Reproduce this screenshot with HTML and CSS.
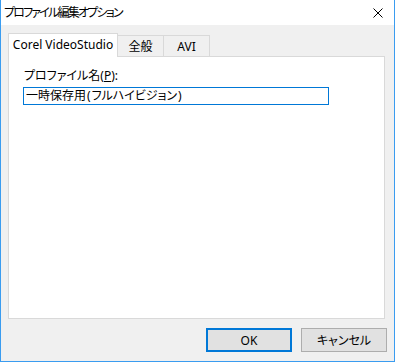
FILE: index.html
```html
<!DOCTYPE html>
<html lang="ja">
<head>
    <meta charset="UTF-8">
    <title>プロファイル編集オプション</title>
    <link rel="stylesheet" href="styles.css">
</head>
<body>
    <div class="window">
        <!-- Title bar -->
        <div class="titlebar">
            <span class="title">プロファイル編集オプション</span>
            <span class="close">
                <svg width="10" height="10" viewBox="0 0 10 10">
                    <path d="M0.5 0.5 L9.5 9.5 M9.5 0.5 L0.5 9.5" stroke="#000" stroke-width="1" fill="none"/>
                </svg>
            </span>
        </div>

        <div class="client">
            <!-- Tabs -->
            <div class="tabs">
                <div class="tab active">Corel VideoStudio</div>
                <div class="tab">全般</div>
                <div class="tab">AVI</div>
            </div>

            <div class="panel">
                <label class="field-label" for="profileName">プロファイル名(<u>P</u>):</label>
                <div class="field-input" id="profileName">一時保存用<span class="paren">(</span>フルハイビジョン<span class="paren">)</span></div>
            </div>

            <!-- Buttons -->
            <div class="footer">
                <button class="btn default">OK</button>
                <button class="btn">キャンセル</button>
            </div>
        </div>
    </div>
</body>
</html>
```

FILE: styles.css
```css
* {
    margin: 0;
    padding: 0;
    box-sizing: border-box;
}

body {
    font-family: "Noto Sans", "Noto Sans CJK JP", sans-serif;
    font-size: 12px;
    font-feature-settings: "palt";
    color: #000;
    background: #fff;
}

.window {
    width: 395px;
    height: 362px;
    border: 1px solid #3a9cf0;
    border-top: none;
    display: flex;
    flex-direction: column;
}

.titlebar {
    height: 25px;
    background: #fff;
    display: flex;
    align-items: center;
    justify-content: space-between;
    padding: 0 11px 0 3px;
}

.title {
    line-height: 16px;
    letter-spacing: -1.8px;
}

.close {
    display: flex;
}

.client {
    flex: 1;
    background: #f0f0f0;
    padding: 8px 7px 0 7px;
    display: flex;
    flex-direction: column;
}

.tabs {
    display: flex;
    align-items: flex-end;
    height: 23px;
}

.tab {
    height: 21px;
    border: 1px solid #d9d9d9;
    border-bottom: none;
    border-left: none;
    background: #f0f0f0;
    display: flex;
    align-items: center;
    justify-content: center;
    width: 46px;
}

.tab.active {
    height: 24px;
    width: 110px;
    margin-bottom: -1px;
    border-left: 1px solid #d9d9d9;
    background: #fff;
    position: relative;
    z-index: 1;
    padding-bottom: 2px;
}

.panel {
    height: 263px;
    margin-right: 2px;
    background: #fff;
    border: 1px solid #d9d9d9;
    padding: 11px 0 0 14px;
}

.field-label {
    display: block;
    line-height: 16px;
    margin-left: 1px;
}

.field-label u {
    text-underline-offset: 1px;
}

.field-input {
    margin-top: 3px;
    width: 306px;
    height: 18px;
    border: 1px solid #0078d7;
    padding-left: 2px;
    line-height: 16px;
}

.field-input .paren {
    padding: 0 1px;
}

.footer {
    display: flex;
    justify-content: flex-end;
    gap: 9px;
    padding-top: 9px;
}

.btn {
    width: 86px;
    height: 24px;
    font: inherit;
    background: #e1e1e1;
    border: 1px solid #adadad;
    color: #000;
}

.btn.default {
    border: 2px solid #0078d7;
}
```
